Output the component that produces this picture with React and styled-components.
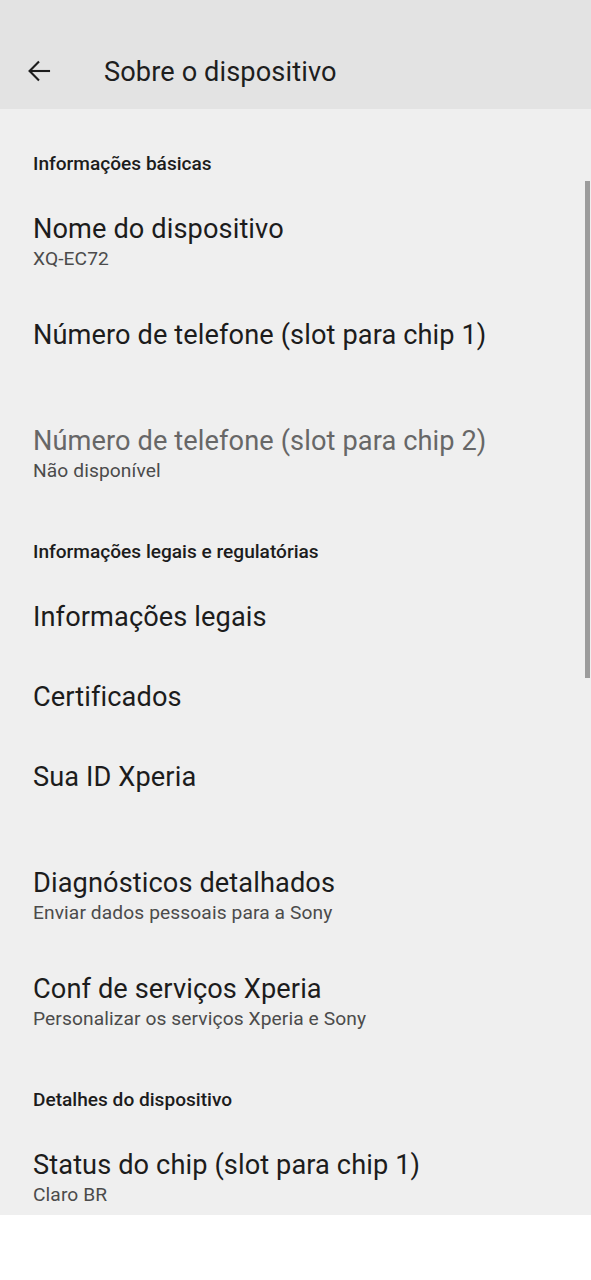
import React from "react";
import styled, { createGlobalStyle } from "styled-components";

const Global = createGlobalStyle`
  html, body { margin: 0; padding: 0; background: #ffffff; }
  body { font-family: Roboto, "Noto Sans", "Liberation Sans", sans-serif; -webkit-font-smoothing: antialiased; }
  * { box-sizing: border-box; }
`;

const Screen = styled.div`
  width: 591px;
  height: 1280px;
  display: flex;
  flex-direction: column;
  background: #ffffff;
  overflow: hidden;
`;

const TopBar = styled.header`
  height: 109px;
  flex: 0 0 109px;
  background: #e3e3e3;
  display: flex;
  align-items: center;
  padding: 34px 0 0 26px;
`;

const BackButton = styled.button`
  width: 26px;
  height: 26px;
  padding: 0;
  border: 0;
  background: transparent;
  display: flex;
  align-items: center;
  justify-content: center;
  margin-right: 52px;
  margin-top: -2px;
  color: #1d1d1d;
`;

const Title = styled.h1`
  margin: 0;
  font-size: 27.2px;
  font-weight: 400;
  color: #1e1e1e;
  letter-spacing: 0.1px;
`;

const ScrollArea = styled.main`
  position: relative;
  height: 1106px;
  flex: 0 0 1106px;
  background: #efefef;
  overflow: hidden;
`;

const ScrollThumb = styled.div`
  position: absolute;
  right: 1px;
  top: 72px;
  width: 5px;
  height: 497px;
  background: #9c9c9c;
`;

const SectionHeader = styled.div`
  padding: ${(p) => (p.$first ? "42px" : "32px")} 33px 12px;
  line-height: 26px;
  font-size: 19.1px;
  font-weight: 500;
  color: #1c1c1c;
`;

const Item = styled.div`
  padding: 23px 33px;
  display: flex;
  flex-direction: column;
`;

const ItemTitle = styled.div`
  font-size: 27.2px;
  line-height: 34px;
  font-weight: 400;
  color: ${(p) => (p.$disabled ? "#676767" : "#1c1c1c")};
  letter-spacing: 0.1px;
  white-space: nowrap;
`;

const ItemSub = styled.div`
  font-size: 19.2px;
  line-height: 26px;
  min-height: 26px;
  color: #4b4b4b;
  letter-spacing: 0.1px;
  white-space: nowrap;
`;

const BottomArea = styled.div`
  flex: 1;
  background: #ffffff;
`;

const BackIcon = () => (
  <svg width="24" height="24" viewBox="0 0 24 24" fill="none" stroke="currentColor" strokeWidth="2.1" strokeLinecap="square">
    <path d="M22 12H3" />
    <path d="M12 2.5L2.6 12L12 21.5" strokeLinecap="butt" />
  </svg>
);

const sections = [
  {
    title: "Informações básicas",
    items: [
      { t: "Nome do dispositivo", s: "XQ-EC72" },
      { t: "Número de telefone (slot para chip 1)", s: "" },
      { t: "Número de telefone (slot para chip 2)", s: "Não disponível", disabled: true },
    ],
  },
  {
    title: "Informações legais e regulatórias",
    items: [
      { t: "Informações legais" },
      { t: "Certificados" },
      { t: "Sua ID Xperia", s: "" },
      { t: "Diagnósticos detalhados", s: "Enviar dados pessoais para a Sony" },
      { t: "Conf de serviços Xperia", s: "Personalizar os serviços Xperia e Sony" },
    ],
  },
  {
    title: "Detalhes do dispositivo",
    items: [{ t: "Status do chip (slot para chip 1)", s: "Claro BR" }],
  },
];

export default function App() {
  return (
    <>
      <Global />
      <Screen>
        <TopBar>
          <BackButton aria-label="Voltar">
            <BackIcon />
          </BackButton>
          <Title>Sobre o dispositivo</Title>
        </TopBar>
        <ScrollArea>
          {sections.map((sec, i) => (
            <section key={sec.title}>
              <SectionHeader $first={i === 0}>{sec.title}</SectionHeader>
              {sec.items.map((it) => (
                <Item key={it.t}>
                  <ItemTitle $disabled={it.disabled}>{it.t}</ItemTitle>
                  {it.s !== undefined && <ItemSub>{it.s}</ItemSub>}
                </Item>
              ))}
            </section>
          ))}
          <ScrollThumb />
        </ScrollArea>
        <BottomArea />
      </Screen>
    </>
  );
}
